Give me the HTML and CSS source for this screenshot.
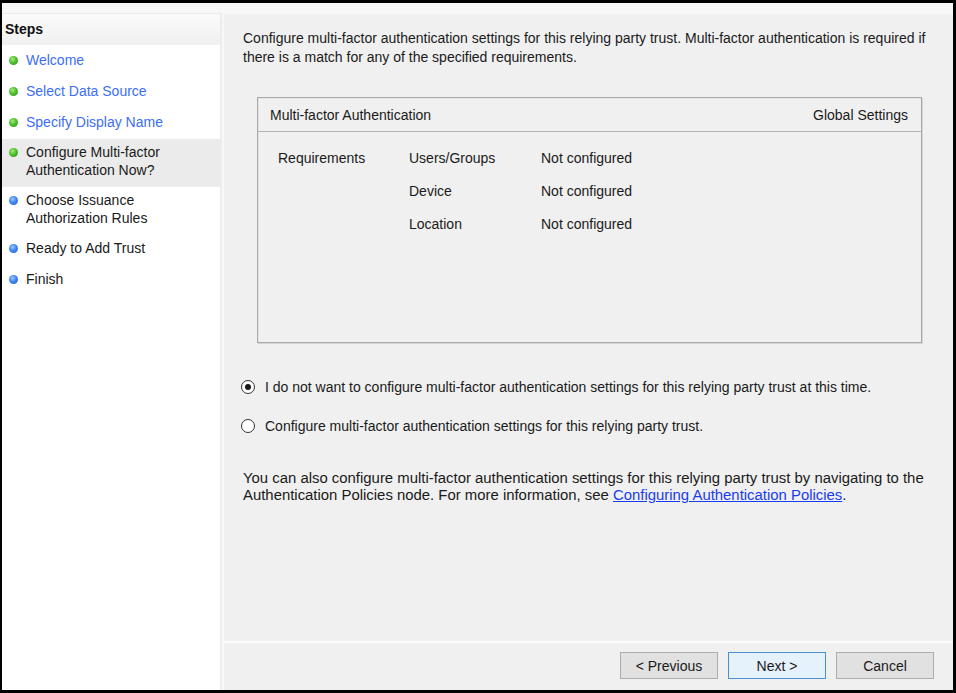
FILE: index.html
```html
<!DOCTYPE html>
<html>
<head>
<meta charset="utf-8">
<link rel="stylesheet" href="styles.css">
</head>
<body>
<div class="frame">
  <div class="wizard">
    <aside class="steps">
      <div class="steps-head">Steps</div>
      <ul class="step-list">
        <li class="step done"><span class="dot green"></span><span class="link">Welcome</span></li>
        <li class="step done"><span class="dot green"></span><span class="link">Select Data Source</span></li>
        <li class="step done"><span class="dot green"></span><span class="link">Specify Display Name</span></li>
        <li class="step current"><span class="dot green"></span><span class="label">Configure Multi-factor<br>Authentication Now?</span></li>
        <li class="step two"><span class="dot blue"></span><span class="label">Choose Issuance<br>Authorization Rules</span></li>
        <li class="step"><span class="dot blue"></span><span class="label">Ready to Add Trust</span></li>
        <li class="step"><span class="dot blue"></span><span class="label">Finish</span></li>
      </ul>
    </aside>
    <main class="page">
      <div class="content">
        <p class="intro">Configure multi-factor authentication settings for this relying party trust. Multi-factor authentication is required if there is a match for any of the specified requirements.</p>
        <div class="mfa-box">
          <div class="mfa-head">
            <span>Multi-factor Authentication</span>
            <span>Global Settings</span>
          </div>
          <div class="mfa-body">
            <div class="req-label">Requirements</div>
            <div class="req-rows">
              <div class="req-row"><span class="req-name">Users/Groups</span><span>Not configured</span></div>
              <div class="req-row"><span class="req-name">Device</span><span>Not configured</span></div>
              <div class="req-row"><span class="req-name">Location</span><span>Not configured</span></div>
            </div>
          </div>
        </div>
        <div class="options">
          <label class="radio"><span class="radio-circle checked"></span>I do not want to configure multi-factor authentication settings for this relying party trust at this time.</label>
          <label class="radio"><span class="radio-circle"></span>Configure multi-factor authentication settings for this relying party trust.</label>
        </div>
        <p class="note">You can also configure multi-factor authentication settings for this relying party trust by navigating to the Authentication Policies node. For more information, see <a class="doc-link" href="#">Configuring Authentication Policies</a>.</p>
      </div>
      <div class="buttons">
        <button class="btn">&lt; Previous</button>
        <button class="btn primary">Next &gt;</button>
        <button class="btn">Cancel</button>
      </div>
    </main>
  </div>
</div>
</body>
</html>
```

FILE: styles.css
```css
* { box-sizing: border-box; }
html, body { margin: 0; padding: 0; }
body {
  background: #000;
  font-family: "Liberation Sans", Arial, sans-serif;
  font-size: 14px;
  color: #1a1a1a;
  width: 956px;
  height: 693px;
  overflow: hidden;
}
.frame {
  margin: 3px 3px 0 2px;
  height: 687px;
  background: #f8f8f8;
  padding-top: 10px;
}
.wizard {
  display: flex;
  height: 100%;
}
.steps {
  width: 220px;
  background: #fff;
  border-right: 2px solid #ececec;
  border-top: 1px solid #ececec;
}
.steps-head {
  height: 31px;
  line-height: 31px;
  padding-left: 3px;
  font-weight: bold;
  font-size: 14px;
  color: #111;
  background: linear-gradient(#fbfbfb, #f0f0f0);
}
.step-list {
  list-style: none;
  margin: 0;
  padding: 0;
}
.step {
  display: flex;
  align-items: flex-start;
  padding: 7px 0 7px 6px;
  line-height: 17px;
}
.step.current {
  background: #ebebeb;
  margin-top: 1px;
  padding: 4px 0 8px 6px;
  line-height: 18px;
}
.step.two { padding: 4px 0 6px 6px; line-height: 18px; }
.dot {
  width: 9px;
  height: 9px;
  border-radius: 50%;
  margin: 4px 8px 0 1px;
  flex: none;
}
.step.current .dot, .step.two .dot { margin-top: 5px; }
.dot.green { background: radial-gradient(circle at 40% 35%, #a8ec7c 0, #4cbf2e 45%, #2a8e16 100%); }
.dot.blue { background: radial-gradient(circle at 40% 35%, #9cc8ff 0, #3f86f0 45%, #1c57c4 100%); }
.step .link { color: #3c6ef8; font-size: 14px; }
.step .label { color: #1a1a1a; font-size: 14px; }
.page {
  flex: 1;
  margin-left: 2px;
  background: #f0f0f0;
  display: flex;
  flex-direction: column;
  border-top: 1px solid #fafafa;
}
.content {
  flex: 1;
  padding: 15px 20px 0 19px;
}
.intro {
  margin: 0;
  line-height: 19px;
}
.mfa-box {
  margin: 30px 11px 0 14px;
  height: 246px;
  border: 1px solid #a9a9a9;
  box-shadow: inset 1px 1px 0 #e4e4e4, 1px 1px 0 #d4d4d4;
}
.mfa-head {
  height: 34px;
  display: flex;
  justify-content: space-between;
  align-items: center;
  padding: 0 13px 0 12px;
  border-bottom: 1px solid #b4b4b4;
}
.mfa-body {
  display: flex;
  padding: 18px 0 0 20px;
}
.req-label { width: 131px; line-height: 17px; }
.req-row {
  display: flex;
  line-height: 17px;
  margin-bottom: 16px;
}
.req-name { width: 132px; }
.options {
  margin-top: 35px;
  display: flex;
  flex-direction: column;
  gap: 21px;
}
.radio {
  display: flex;
  align-items: center;
  line-height: 18px;
}
.radio-circle {
  width: 14px;
  height: 14px;
  border-radius: 50%;
  border: 1px solid #333;
  background: #fff;
  margin: 0 10px 0 -2px;
  position: relative;
  flex: none;
}
.radio-circle.checked::after {
  content: "";
  position: absolute;
  left: 3px;
  top: 3px;
  width: 6px;
  height: 6px;
  border-radius: 50%;
  background: #1a1a1a;
}
.note {
  margin: 35px 0 0;
  font-size: 14.9px;
  line-height: 17px;
}
.doc-link { color: #1a3cf0; text-decoration: underline; }
.buttons {
  height: 49px;
  border-top: 2px solid #fbfbfb;
  display: flex;
  justify-content: flex-end;
  align-items: flex-start;
  gap: 10px;
  padding: 9px 19px 0 0;
}
.btn {
  width: 98px;
  height: 27px;
  font-family: inherit;
  font-size: 14px;
  color: #1a1a1a;
  background: #e1e1e1;
  border: 1px solid #adadad;
  padding: 0;
}
.btn.primary { border-color: #4a90d0; background: #e5f1fb; }
```
